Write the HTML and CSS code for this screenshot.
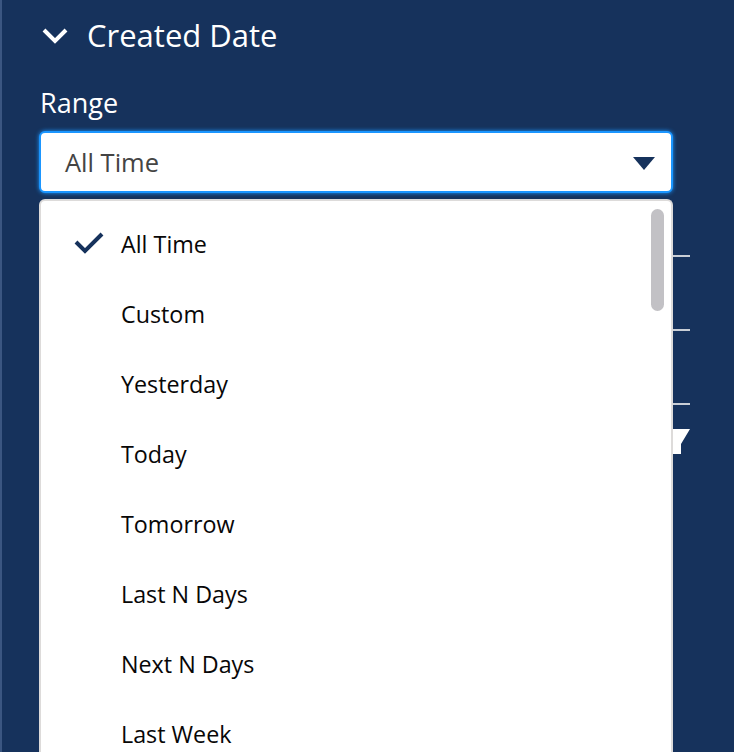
FILE: index.html
```html
<!DOCTYPE html>
<html>
<head>
<meta charset="utf-8">
<link rel="stylesheet" href="styles.css">
</head>
<body>
<div class="panel">
  <div class="section-header">
    <svg class="chevron" width="28" height="18" viewBox="0 0 28 18"><path d="M3 3 L14 14 L25 3" fill="none" stroke="#fff" stroke-width="4"/></svg>
    <span class="section-title">Created Date</span>
  </div>
  <div class="field">
    <div class="label">Range</div>
    <div class="combo">
      <div class="input">
        <span class="input-value">All Time</span>
        <svg class="caret" width="22" height="14" viewBox="0 0 22 14"><path d="M0 0 H22 L11 13 Z" fill="#16325c"/></svg>
      </div>
      <div class="behind">
        <div class="behind-line l1"></div>
        <div class="behind-line l2"></div>
        <div class="behind-line l3"></div>
        <svg class="behind-funnel" width="18" height="28" viewBox="0 0 18 28"><path d="M0 0 H17 L8 15 V25 H0 Z" fill="#fff"/></svg>
      </div>
      <div class="listbox">
        <div class="scrollbar"></div>
        <div class="option selected">
          <svg class="check" width="30" height="22" viewBox="0 0 30 22"><path d="M2 10 L11 19 L28 2" fill="none" stroke="#16325c" stroke-width="4"/></svg>
          <span>All Time</span>
        </div>
        <div class="option"><span>Custom</span></div>
        <div class="option"><span>Yesterday</span></div>
        <div class="option"><span>Today</span></div>
        <div class="option"><span>Tomorrow</span></div>
        <div class="option"><span>Last N Days</span></div>
        <div class="option"><span>Next N Days</span></div>
        <div class="option"><span>Last Week</span></div>
      </div>
    </div>
  </div>
</div>
</body>
</html>
```
FILE: styles.css
```css
html, body {
  margin: 0;
  padding: 0;
  height: 100%;
}
body {
  background: #16325c;
  font-family: "Open Sans", "Noto Sans", sans-serif;
  overflow: hidden;
  border-left: 2px solid #3b5681;
  box-sizing: border-box;
}
.panel {
  padding: 0 61px 0 37px;
}
.section-header {
  display: flex;
  align-items: center;
  height: 70px;
  color: #fff;
}
.chevron {
  margin-left: 2px;
  margin-right: 18px;
  margin-top: 2px;
}
.section-title {
  font-size: 31px;
  line-height: 40px;
}
.field {
  display: flex;
  flex-direction: column;
}
.label {
  color: #fff;
  font-size: 27px;
  line-height: 32px;
  margin: 17px 0 12px 1px;
}
.combo {
  position: relative;
}
.input {
  height: 58px;
  background: #fff;
  border: 2px solid #1b96ff;
  border-radius: 6px;
  box-shadow: 0 0 4px #1b96ff;
  display: flex;
  align-items: center;
  justify-content: space-between;
  padding: 0 16px 0 24px;
}
.input-value {
  color: #444;
  font-size: 25.5px;
}
.caret {
  margin-top: 3px;
}
.behind {
  position: absolute;
  left: 634px;
  top: 62px;
  width: 20px;
  height: 300px;
}
.behind-line {
  position: absolute;
  left: 0;
  width: 17px;
  height: 2px;
  background: #c9ced6;
}
.l1 { top: 62px; }
.l2 { top: 136px; }
.l3 { top: 210px; }
.behind-funnel {
  position: absolute;
  left: 0;
  top: 236px;
}
.listbox {
  position: relative;
  margin-top: 6px;
  background: #fff;
  border: 2px solid #dddbda;
  border-bottom: none;
  border-radius: 6px 6px 0 0;
  height: 545px;
  overflow: hidden;
  padding-top: 8px;
}
.scrollbar {
  position: absolute;
  right: 7px;
  top: 8px;
  width: 13px;
  height: 102px;
  background: #c2c1c5;
  border-radius: 7px;
}
.option {
  height: 70px;
  flex-shrink: 0;
  display: flex;
  align-items: center;
  padding-left: 80px;
  position: relative;
  color: #080707;
  font-size: 23.3px;
}
.check {
  position: absolute;
  left: 33px;
  top: 23px;
}
```
